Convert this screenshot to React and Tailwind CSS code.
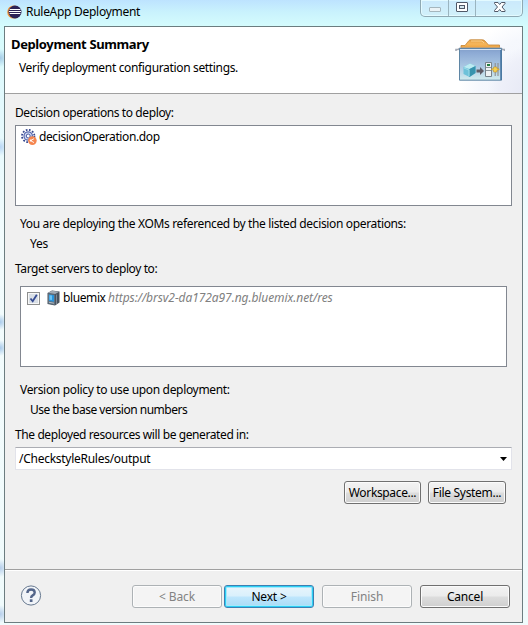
import React from "react";

function Line({ className = "", children }) {
  return <div className={"h-5 shrink-0 whitespace-nowrap leading-5 " + className}>{children}</div>;
}

function Button({ kind = "normal", className = "", children }) {
  const kinds = {
    normal:
      "border-[#707070] text-black bg-[linear-gradient(#f3f3f3_0%,#ebebeb_48%,#dddddd_52%,#cfcfcf_100%)] shadow-[inset_0_0_0_1px_#fbfbfb]",
    primary:
      "border-[#3c7fb1] text-black bg-[linear-gradient(#e9f5fc_0%,#d9f0fc_48%,#bee6fd_52%,#a9dbf5_100%)] shadow-[inset_0_0_0_1px_#2ccff5,inset_0_0_0_2px_#a4e9fb]",
    disabled: "border-[#adb2b5] text-[#838383] bg-[#f4f4f4] shadow-[inset_0_0_0_1px_#fcfcfc]",
  };
  return (
    <button className={"h-[23px] shrink-0 whitespace-nowrap rounded-[3px] border text-center leading-[21px] " + kinds[kind] + " " + className}>
      {children}
    </button>
  );
}

function EclipseLogo() {
  return (
    <svg className="block h-[14px] w-[15px] shrink-0" viewBox="0 0 15 14">
      <circle cx="6.8" cy="7" r="6.6" fill="#f0963c" />
      <circle cx="8" cy="7" r="6.5" fill="#2c2255" />
      <path d="M2.6 4.5h10.8M2 6.5h12M2.6 8.5h10.8" stroke="#fff" strokeWidth="1" />
    </svg>
  );
}

function DeployIcon() {
  return (
    <svg className="block h-[42px] w-[50px]" viewBox="0 0 50 42">
      <defs>
        <linearGradient id="box" x1="0" y1="0" x2="0" y2="1">
          <stop offset="0" stopColor="#829fca" />
          <stop offset=".15" stopColor="#8eabd5" />
          <stop offset=".55" stopColor="#a9c6e2" />
          <stop offset="1" stopColor="#d1ecee" />
        </linearGradient>
        <linearGradient id="folder" x1="0" y1="0" x2="0" y2="1">
          <stop offset="0" stopColor="#e3a044" />
          <stop offset=".5" stopColor="#f6b65c" />
          <stop offset="1" stopColor="#eda23c" />
        </linearGradient>
      </defs>
      <path d="M6 9V6.5H10L14 1.5Q14.5.8 16 .8H27Q29 .8 30 2L33.5 6H44.5V9Z" fill="url(#folder)" stroke="#c38334" strokeWidth=".8" />
      <path d="M16 2H27L29 4" stroke="#fbd08c" fill="none" />
      <path d="M1 12V10.5H3L5 9.4H46L47.5 10.5H49.5V12" fill="none" stroke="#a5aab5" strokeWidth="1.6" />
      <path d="M4.5 9.5H46.5V41.2H4.5Z" fill="url(#box)" stroke="#5f86a5" />
      <path d="M5 10.5H46" stroke="#d7e3f2" />
      <path d="M46 11V41" stroke="#4475a2" strokeWidth="1.5" />
      <path d="M8.5 28L15 24.5L20.5 27V34L14.5 38L8.5 35Z" fill="#6dc2d9" />
      <path d="M8.5 28L15 24.5L20.5 27L14.5 30Z" fill="#bcebf2" />
      <path d="M14.5 30L20.5 27V34L14.5 38Z" fill="#3793ad" />
      <path d="M9 29L14 31V37" stroke="#a8e1eb" fill="none" strokeWidth=".8" />
      <path d="M21.5 30.5H25V28L29 32L25 36V33.5H21.5Z" fill="#5f5c66" />
      <path d="M30.5 23.5H36.5V37.5H30.5Z" fill="#eef2f3" stroke="#77838b" />
      <path d="M31 28.5H36M31 31.5H36" stroke="#8b969b" />
      <path d="M32 25H35V27H32Z" fill="#247d42" />
      <path d="M40.2 24V37M43 24V37" stroke="#8c8780" />
      <path d="M36.5 29.7H38.5V28H42V29.7H44V31H42V33H38.5V31H36.5Z" fill="#f5d050" stroke="#b98b27" strokeWidth=".5" />
    </svg>
  );
}

function OperationIcon() {
  return (
    <svg className="block h-4 w-4 shrink-0" viewBox="0 0 16 16">
      <circle cx="7.2" cy="7" r="6.2" fill="none" stroke="#34458d" strokeWidth="1.8" strokeDasharray="1.7 1.55" />
      <circle cx="7.2" cy="7" r="4.2" fill="#d5dff5" stroke="#5a6bb0" strokeWidth="1.3" />
      <circle cx="7.2" cy="7" r="2" fill="#fff" stroke="#4354a0" />
      <circle cx="11.4" cy="11.6" r="4.3" fill="#f58650" />
      <path d="M13 9.7L9.6 11.6L13 13.6" stroke="#fff" strokeWidth=".9" fill="none" />
      <circle cx="9.7" cy="11.6" r="1" fill="#fff" />
    </svg>
  );
}

function ServerIcon() {
  return (
    <svg className="block h-4 w-[13px] shrink-0" viewBox="0 0 13 16">
      <path d="M.5 3L5 .5L12.5 1.5V12.5L8 15.5L.5 14Z" fill="#49535f" />
      <path d="M.8 3L5 .8L12.2 1.8L8.2 4Z" fill="#a1aab5" />
      <path d="M1 3.5L8 4.5V15L1 13.5Z" fill="#60707f" />
      <path d="M2 4.5L7 5.2V11.8L2 11Z" fill="#2795df" />
      <path d="M2.5 5.2L5 5.5V10L2.5 9.7Z" fill="#6dc3f3" />
      <path d="M2 12.3L7 13.2" stroke="#b3bdc6" />
      <path d="M9.5 4.5V14" stroke="#7f8995" />
    </svg>
  );
}

function WindowControls() {
  return (
    <div className="flex h-[17px] w-[103px] shrink-0 rounded-b-[5px] border border-t-0 border-[#8fa9b3] bg-[#d3edf8]/60 shadow-[inset_0_0_0_1px_#e3faff]">
      <div className="w-7 border-r border-[#9ab4bf]">
        <svg className="block h-4 w-7" viewBox="0 0 28 16">
          <rect x="8.5" y="7.5" width="11" height="4" rx=".5" fill="#eaf3f6" stroke="#a5b6bd" />
        </svg>
      </div>
      <div className="w-[27px] border-r border-[#9ab4bf]">
        <svg className="block h-4 w-[26px]" viewBox="0 0 26 16">
          <rect x="7.5" y="2.5" width="11" height="9" rx=".5" fill="#fff" stroke="#505867" />
          <rect x="10.5" y="5.5" width="5" height="3" fill="#d5e7ef" stroke="#505867" />
        </svg>
      </div>
      <svg className="block h-4 w-[46px]" viewBox="0 0 46 16">
        <path d="M18.5 2.5H22L23.7 4.5L25.4 2.5H29V3.5L26 7L29 10.5V11.5H25.4L23.7 9.5L22 11.5H18.5V10.5L21.5 7L18.5 3.5Z" fill="#fff" stroke="#505867" />
      </svg>
    </div>
  );
}

export default function App() {
  return (
    <div className="flex h-[625px] w-[528px] flex-col overflow-hidden bg-[radial-gradient(circle_at_0px_58px,#a5cbe6_0,transparent_9px),radial-gradient(circle_at_0px_147px,#b8d5f4_0,transparent_9px),radial-gradient(circle_at_0px_322px,#a8c9ea_0,transparent_8px),radial-gradient(circle_at_0px_348px,#a8c9ea_0,transparent_8px),radial-gradient(circle_at_0px_568px,#b5cdea_0,transparent_9px),radial-gradient(circle_at_0px_614px,#b5cdea_0,transparent_9px),linear-gradient(#bde3ff_0px,#c9f2fd_12px,#d5fcfd_26px,#e3f9fd_100px,#f3fcfd_240px,#f0fbfc_100%)] font-['Noto_Sans','Segoe_UI',sans-serif] text-[12px] text-black">
      <div className="flex h-[26px] shrink-0 items-start justify-between pl-[7px] pr-[5px]">
        <div className="flex h-6 items-center gap-1">
          <EclipseLogo />
          <Line className="tracking-[-0.28px]">RuleApp Deployment</Line>
        </div>
        <WindowControls />
      </div>

      <main className="ml-1 flex h-[597px] w-[519px] shrink-0 flex-col border border-[#6c7d80] bg-[#f0f0f0]">
        <header className="flex h-[67px] shrink-0 justify-between border-b border-[#a0a0a0] bg-white bg-[radial-gradient(circle_at_530px_66px,#e4e7f4_0px,#eef0f9_36px,transparent_48px),radial-gradient(circle_at_530px_66px,#f0f3fb_0px,#f6f8fd_56px,transparent_76px)] pl-[6px] pr-[17px]">
          <div className="pt-[7px]">
            <Line className="text-[13px] font-bold tracking-[-0.38px]">Deployment Summary</Line>
            <Line className="mt-1 pl-2 tracking-[-0.34px]">Verify deployment configuration settings.</Line>
          </div>
          <div className="pt-3">
            <DeployIcon />
          </div>
        </header>

        <section className="flex h-[475px] shrink-0 flex-col px-[10px] pt-[9px]">
          <Line className="tracking-[-0.4px]">Decision operations to deploy:</Line>
          <div className="mt-[2px] h-[81px] w-[497px] shrink-0 border border-[#828790] bg-white pl-[5px] pt-[1px]">
            <div className="flex h-5 items-center gap-[2px]">
              <OperationIcon />
              <Line className="tracking-[-0.39px]">decisionOperation.dop</Line>
            </div>
          </div>
          <Line className="mt-2 pl-[5px] tracking-[-0.35px]">You are deploying the XOMs referenced by the listed decision operations:</Line>
          <Line className="pl-[15px] tracking-[-0.2px]">Yes</Line>
          <Line className="mt-[5px] tracking-[-0.4px]">Target servers to deploy to:</Line>
          <div className="ml-[5px] mt-[7px] h-[81px] w-[487px] shrink-0 border border-[#828790] bg-white pl-[6px]">
            <div className="flex h-[22px] items-center">
              <div className="h-[13px] w-[13px] border border-[#8e8f8f] bg-[#d9dfe6] shadow-[inset_0_0_0_1px_#f7f7f7]">
                <svg className="block h-[11px] w-[11px]" viewBox="0 0 11 11">
                  <path d="M2.5 5.5L4.7 8.2L8.8 1.8" fill="none" stroke="#344a91" strokeWidth="1.8" />
                </svg>
              </div>
              <div className="ml-[7px]">
                <ServerIcon />
              </div>
              <Line className="ml-[3px] w-[45px] tracking-[-0.4px]">bluemix</Line>
              <Line className="italic tracking-[-0.07px] text-[#808080]">https://brsv2-da172a97.ng.bluemix.net/res</Line>
            </div>
          </div>
          <Line className="mt-[13px] pl-[5px] tracking-[-0.33px]">Version policy to use upon deployment:</Line>
          <Line className="pl-[15px] tracking-[-0.5px]">Use the base version numbers</Line>
          <Line className="mt-[5px] tracking-[-0.4px]">The deployed resources will be generated in:</Line>
          <div className="mt-[2px] flex h-[23px] w-[497px] shrink-0 items-center justify-between border border-[#e2e3ea] border-t-[#abadb3] bg-white pl-[3px] pr-[4px]">
            <Line className="tracking-[-0.27px]">/CheckstyleRules/output</Line>
            <svg className="block h-1 w-[7px]" viewBox="0 0 7 4">
              <path d="M0 0H7L3.5 4Z" />
            </svg>
          </div>
          <div className="mt-[11px] flex justify-end gap-[7px] pr-[6px]">
            <Button className="w-[77px] tracking-[-0.35px]">Workspace...</Button>
            <Button className="w-[78px] tracking-[-0.3px]">File System...</Button>
          </div>
        </section>

        <footer className="flex h-[53px] shrink-0 items-start border-t border-[#a0a0a0] pl-[15px] pt-[15px] shadow-[inset_0_1px_0_#ffffff]">
          <svg className="block h-[22px] w-[22px] shrink-0" viewBox="0 0 22 22">
            <circle cx="11" cy="10.5" r="9.6" fill="#f1f4f8" stroke="#66788f" />
            <path d="M7.4 8.1Q7.4 4.5 11.1 4.5Q14.7 4.5 14.7 7.6Q14.7 9.3 12.7 10.4Q11.1 11.3 11.1 13" fill="none" stroke="#53658a" strokeWidth="2.4" />
            <rect x="9.8" y="14.3" width="2.7" height="2.7" fill="#53658a" />
          </svg>
          <Button kind="disabled" className="ml-[90px] w-[90px] tracking-[-0.1px]">&lt; Back</Button>
          <Button kind="primary" className="ml-[2px] w-[90px] tracking-[-0.2px]">Next &gt;</Button>
          <Button kind="disabled" className="ml-2 w-[90px] tracking-[-0.1px]">Finish</Button>
          <Button className="ml-2 w-[90px] tracking-[-0.2px]">Cancel</Button>
        </footer>
      </main>
    </div>
  );
}
